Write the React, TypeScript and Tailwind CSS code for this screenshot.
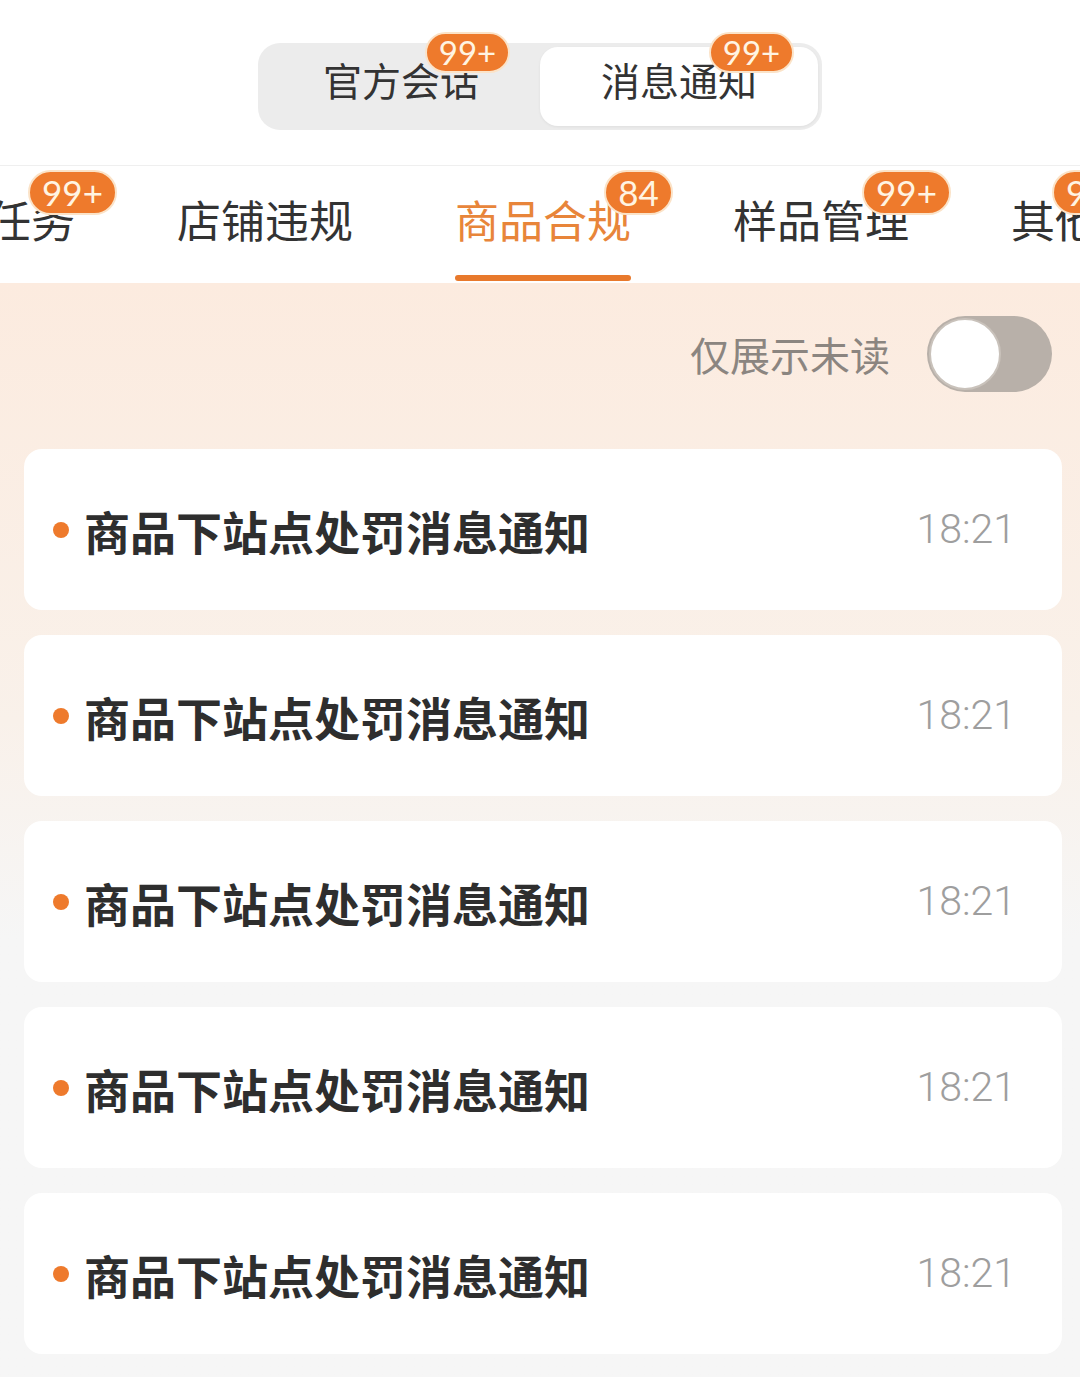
import React from 'react';

const cjk = { fontFamily: '"Noto Sans CJK SC", "Noto Sans", sans-serif' };
const num = { fontFamily: 'Lato, "Noto Sans", sans-serif' };

function Badge({ text, className }: { text: string; className: string }) {
    return (
        <span
            className={`absolute flex items-center justify-center rounded-full bg-[#ee7a2c] border-2 border-[#fbe3c8] text-[#fff4e2] leading-none ${className}`}
            style={num}
        >
            {text}
        </span>
    );
}

const tabs = [
    { label: '任务', badge: '99+' },
    { label: '店铺违规', badge: '' },
    { label: '商品合规', badge: '84', active: true },
    { label: '样品管理', badge: '99+' },
    { label: '其他', badge: '99+' },
];

export default function App() {
    return (
        <div className="w-[1080px] h-[1377px] overflow-hidden bg-[#f6f6f6]" style={cjk}>
            {/* Header with segmented control */}
            <div className="h-[166px] bg-white border-b border-[#efefef] pt-[43px] flex justify-center">
                <div className="flex w-[564px] h-[87px] p-[4px] rounded-[22px] bg-[#ececec]">
                    <div className="flex-1 flex items-center justify-center pb-[15px]">
                        <span className="relative text-[39px] leading-[39px] text-[#333]">
                            官方会话
                            <Badge text="99+" className="-top-[28px] -right-[31px] w-[85px] h-[41px] text-[33px]" />
                        </span>
                    </div>
                    <div className="flex-1 flex items-center justify-center pb-[15px] rounded-[18px] bg-white shadow-[0_1px_3px_rgba(0,0,0,0.06)]">
                        <span className="relative text-[39px] leading-[39px] text-[#333]">
                            消息通知
                            <Badge text="99+" className="-top-[28px] -right-[37px] w-[85px] h-[41px] text-[33px]" />
                        </span>
                    </div>
                </div>
            </div>

            {/* Category tabs */}
            <div className="h-[117px] bg-white overflow-hidden">
                <div className="flex gap-[102px] -ml-[13px] h-full">
                    {tabs.map((t) => (
                        <div key={t.label} className="flex flex-col shrink-0 h-full">
                            <span
                                className={`relative mt-[31px] text-[44px] leading-[44px] whitespace-nowrap ${
                                    t.active ? 'text-[#e8853a]' : 'text-[#333]'
                                }`}
                            >
                                {t.label}
                                {t.badge && (
                                    <Badge
                                        text={t.badge}
                                        className={`-top-[27px] -right-[42px] h-[45px] text-[35px] ${
                                            t.badge === '84' ? 'w-[69px]' : 'w-[89px]'
                                        }`}
                                    />
                                )}
                            </span>
                            <div
                                className={`mt-auto mb-[2px] h-[6px] rounded-full ${
                                    t.active ? 'bg-[#e8792c]' : 'bg-transparent'
                                }`}
                            />
                        </div>
                    ))}
                </div>
            </div>

            {/* Body */}
            <div className="bg-gradient-to-b from-[#fcebdf] via-[#f9f1ea] via-40% to-[#f6f6f6] to-60% pb-[22px]">
                <div className="flex items-center justify-end pr-[28px] pt-[33px] gap-[37px]">
                    <span className="text-[40px] leading-[40px] text-[#8b8580]">仅展示未读</span>
                    <div className="w-[125px] h-[76px] rounded-full bg-[#b8b0a9] p-[2px] flex items-center">
                        <div className="w-[72px] h-[72px] rounded-full bg-white border-2 border-[#c9c2bb]" />
                    </div>
                </div>

                <div className="flex flex-col gap-[25px] ml-[24px] mr-[18px] mt-[57px]">
                    {[0, 1, 2, 3, 4].map((i) => (
                        <div
                            key={i}
                            className="h-[161px] rounded-[18px] bg-white flex items-center pl-[29px] pr-[46px]"
                        >
                            <span className="w-[16px] h-[16px] rounded-full bg-[#ee7a2c] shrink-0" />
                            <span className="ml-[15px] text-[46px] leading-[46px] font-bold text-[#2e2e2e]">
                                商品下站点处罚消息通知
                            </span>
                            <span
                                className="ml-auto text-[41px] leading-[41px] text-[#9e9e9e]"
                                style={{ fontFamily: 'Roboto, "Noto Sans", sans-serif', fontWeight: 300 }}
                            >
                                18:21
                            </span>
                        </div>
                    ))}
                </div>
            </div>
        </div>
    );
}
